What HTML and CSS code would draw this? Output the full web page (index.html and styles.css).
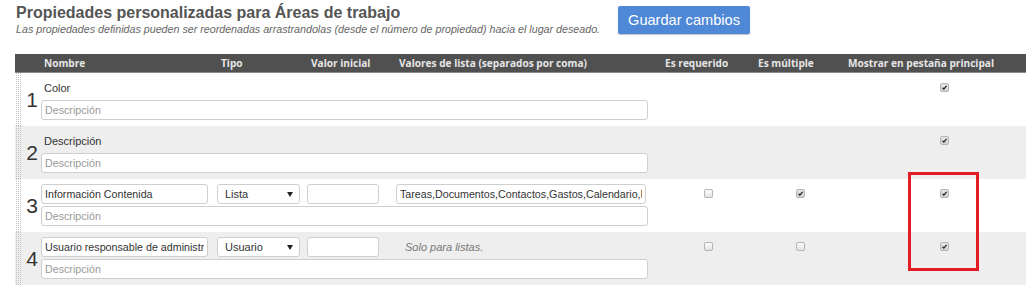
FILE: index.html
```html
<!DOCTYPE html>
<html lang="es">
<head>
    <meta charset="UTF-8">
    <meta name="viewport" content="width=device-width, initial-scale=1.0">
    <title>Propiedades personalizadas</title>
    <link rel="stylesheet" href="styles.css">
</head>
<body>
    <div class="page">
        <div class="top">
            <div class="heading">
                <h1>Propiedades personalizadas para Áreas de trabajo</h1>
                <p class="hint">Las propiedades definidas pueden ser reordenadas arrastrandolas (desde el número de propiedad) hacia el lugar deseado.</p>
            </div>
            <button class="save">Guardar cambios</button>
        </div>

        <div class="props">
            <div class="props-head">
                <span class="lead"></span>
                <span>Nombre</span>
                <span>Tipo</span>
                <span>Valor inicial</span>
                <span>Valores de lista (separados por coma)</span>
                <span>Es requerido</span>
                <span>Es múltiple</span>
                <span>Mostrar en pestaña principal</span>
            </div>

            <div class="prop">
                <div class="handle"></div>
                <div class="num">1</div>
                <div class="name">Color</div>
                <input class="desc" type="text" placeholder="Descripción">
                <div class="check c-req"></div>
                <div class="check c-mul"></div>
                <div class="check c-main"><span class="cb on"><svg viewBox="0 0 10 10"><path d="M2.2 5.4 L4.1 7.3 L7.9 2.6"/></svg></span></div>
            </div>

            <div class="prop alt">
                <div class="handle"></div>
                <div class="num">2</div>
                <div class="name">Descripción</div>
                <input class="desc" type="text" placeholder="Descripción">
                <div class="check c-req"></div>
                <div class="check c-mul"></div>
                <div class="check c-main"><span class="cb on"><svg viewBox="0 0 10 10"><path d="M2.2 5.4 L4.1 7.3 L7.9 2.6"/></svg></span></div>
            </div>

            <div class="prop">
                <div class="handle"></div>
                <div class="num">3</div>
                <input class="name-in" type="text" value="Información Contenida">
                <div class="select c-tipo"><span>Lista</span><i class="arrow"></i></div>
                <input class="initial" type="text">
                <input class="list" type="text" value="Tareas,Documentos,Contactos,Gastos,Calendario,Notas">
                <input class="desc" type="text" placeholder="Descripción">
                <div class="check c-req"><span class="cb"></span></div>
                <div class="check c-mul"><span class="cb on"><svg viewBox="0 0 10 10"><path d="M2.2 5.4 L4.1 7.3 L7.9 2.6"/></svg></span></div>
                <div class="check c-main"><span class="cb on"><svg viewBox="0 0 10 10"><path d="M2.2 5.4 L4.1 7.3 L7.9 2.6"/></svg></span></div>
            </div>

            <div class="prop alt">
                <div class="handle"></div>
                <div class="num">4</div>
                <input class="name-in" type="text" value="Usuario responsable de administración">
                <div class="select c-tipo"><span>Usuario</span><i class="arrow"></i></div>
                <input class="initial" type="text">
                <div class="only">Solo para listas.</div>
                <input class="desc" type="text" placeholder="Descripción">
                <div class="check c-req"><span class="cb"></span></div>
                <div class="check c-mul"><span class="cb"></span></div>
                <div class="check c-main"><span class="cb on"><svg viewBox="0 0 10 10"><path d="M2.2 5.4 L4.1 7.3 L7.9 2.6"/></svg></span></div>
            </div>
        </div>

        <div class="mark"></div>
    </div>
</body>
</html>
```

FILE: styles.css
```css
body {
    margin: 0;
    font-family: "Liberation Sans", Arial, sans-serif;
    color: #333;
    background: #fff;
    overflow: hidden;
}
.page {
    position: relative;
    padding: 4px 0 0 15px;
}
.top {
    display: flex;
    align-items: flex-start;
    padding-left: 1px;
}
.heading {
    width: 584px;
    white-space: nowrap;
}
.heading h1 {
    margin: 0;
    font-size: 16px;
    line-height: 18px;
    font-weight: bold;
    color: #555;
}
.hint {
    margin: 1px 0 0;
    font-size: 10.7px;
    line-height: 13px;
    font-style: italic;
    color: #666;
}
.save {
    margin: 2px 0 0 18px;
    width: 132px;
    height: 28px;
    border: none;
    border-radius: 2px;
    background: #4e88d7;
    color: #fff;
    font-family: "Liberation Sans", Arial, sans-serif;
    font-size: 14.6px;
    box-shadow: 0 1px 1px rgba(0, 0, 0, 0.25);
}

.props {
    width: 1028px;
    margin-top: 18px;
}
.props-head, .prop {
    display: grid;
    grid-template-columns: 8px 18px 176px 90px 89px 266px 93px 90px 198px;
}
.props-head {
    background: #505050;
    border-bottom: 1px solid #8a8a8a;
    height: 18px;
    align-items: center;
    font-family: "Open Sans", sans-serif;
    font-weight: bold;
    font-size: 10.1px;
    color: #e6e6e6;
    white-space: nowrap;
}
.props-head span {
    padding-left: 3px;
}
.props-head .lead {
    grid-column: 1 / 3;
    padding: 0;
}
.props-head span:nth-child(3),
.props-head span:nth-child(4) {
    padding-left: 4px;
}

.prop {
    grid-template-rows: 20px 20px;
    row-gap: 2px;
    padding: 5px 0 6px;
    background: #fff;
    font-size: 11px;
}
.prop.alt {
    background: #eeeeee;
}
.handle {
    grid-column: 1;
    grid-row: 1 / 3;
    margin: -5px 1px -6px 0;
    background: conic-gradient(#c2c2c2 25%, transparent 0) 0 0 / 2px 2px;
}
.num {
    grid-column: 2;
    grid-row: 1 / 3;
    align-self: center;
    text-align: center;
    font-size: 21px;
    line-height: 22px;
    color: #333;
    padding-top: 1px;
}
.name {
    grid-column: 3;
    grid-row: 1;
    align-self: center;
    padding-left: 3px;
}
input {
    box-sizing: border-box;
    height: 20px;
    padding: 0 3px;
    border: 1px solid #cfcfcf;
    border-radius: 3px;
    background: #fff;
    font-family: "Liberation Sans", Arial, sans-serif;
    font-size: 10.7px;
    color: #333;
    outline: none;
}
input::placeholder {
    color: #9a9a9a;
}
.name-in {
    grid-column: 3;
    grid-row: 1;
    width: 167px;
}
.select {
    grid-column: 4;
    grid-row: 1;
    box-sizing: border-box;
    width: 83px;
    height: 20px;
    display: flex;
    align-items: center;
    justify-content: space-between;
    padding: 0 6px 0 7px;
    border: 1px solid #cfcfcf;
    border-radius: 3px;
    background: #fff;
}
.arrow {
    width: 0;
    height: 0;
    border-left: 3px solid transparent;
    border-right: 3px solid transparent;
    border-top: 5px solid #222;
}
.initial {
    grid-column: 5;
    grid-row: 1;
    width: 72px;
}
.list {
    grid-column: 6;
    grid-row: 1;
    width: 250px;
}
.only {
    grid-column: 6;
    grid-row: 1;
    align-self: center;
    padding-left: 9px;
    font-style: italic;
    color: #777;
}
.desc {
    grid-column: 3 / 7;
    grid-row: 2;
    width: 607px;
}
.check {
    grid-row: 1;
    display: flex;
    justify-content: center;
    align-items: center;
}
.c-req { grid-column: 7; }
.c-mul { grid-column: 8; }
.c-main { grid-column: 9; }
.cb {
    box-sizing: border-box;
    width: 9px;
    height: 9px;
    margin-top: -1px;
    border: 1px solid #b4b4b4;
    border-radius: 2px;
    background: linear-gradient(#fbfbfb, #e4e4e4);
}
.cb.on {
    background: linear-gradient(#e6e6e6, #d2d2d2);
}
.cb svg {
    display: block;
    width: 7px;
    height: 7px;
}
.cb path {
    fill: none;
    stroke: #222;
    stroke-width: 1.8;
}

.mark {
    position: absolute;
    left: 908px;
    top: 172px;
    width: 71px;
    height: 99px;
    box-sizing: border-box;
    border: 3px solid #e41b23;
}
```
